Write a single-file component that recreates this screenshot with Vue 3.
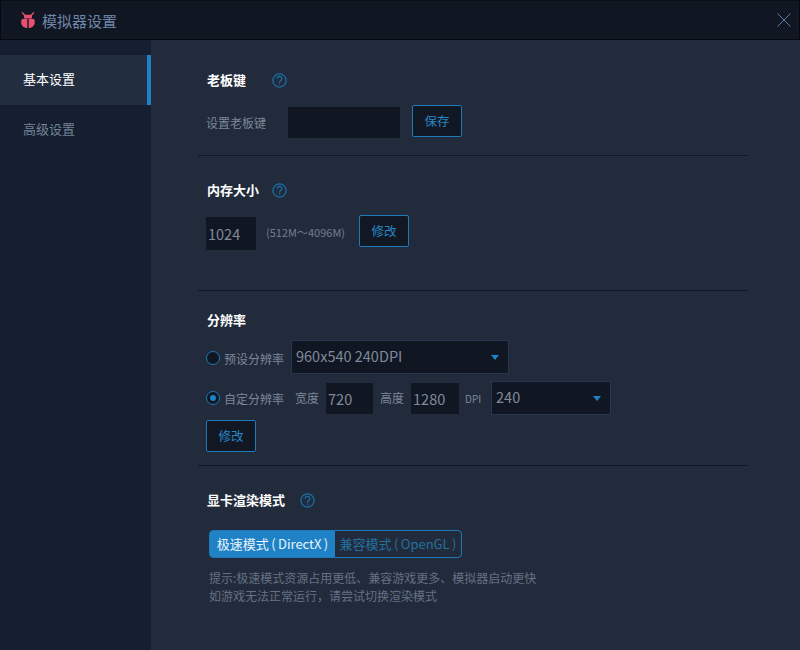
<script setup>
const Q = 'M7 7.500a3 3 0 1 1 4.600 2.500c-1.200.8-1.600 1.400-1.600 3'
</script>

<template>
  <div class="win">
    <header class="titlebar">
      <svg class="logo" width="14" height="16" viewBox="0 0 14 16">
        <path d="M1.600 0 4.200 2.800h5.600L12.400 0l1 .7-2.500 3L11 6.500H3L3.100 3.700.6.700z" fill="#e9506f" />
        <path d="M1 7H6.300v9C3 16 .2 13.500.2 10.500.2 9 .3 8 1 7zM7.700 7H13c.7 1 .8 2 .8 3.500 0 3-2.800 5.500-6.100 5.500z" fill="#e9506f" />
      </svg>
      <span class="title">模拟器设置</span>
      <svg class="close" width="14" height="14" viewBox="0 0 14 14">
        <path d="M.5.5l13 13M13.500.5l-13 13" stroke="#5d7ba6" fill="none" />
      </svg>
    </header>
    <div class="body">
      <nav class="side">
        <div class="nav active">基本设置</div>
        <div class="nav">高级设置</div>
      </nav>
      <main class="main">
        <section class="sec s1">
          <div class="head">
            <h3>老板键</h3>
            <svg class="help h1" width="15" height="15" viewBox="0 0 20 20"><circle cx="10" cy="10" r="8.800" /><path :d="Q" /><path d="M10 14.200v1.500" /></svg>
          </div>
          <div class="row r1">
            <span class="label kl">设置老板键</span>
            <div class="input key"></div>
            <button class="btn">保存</button>
          </div>
        </section>
        <section class="sec s2">
          <div class="head">
            <h3>内存大小</h3>
            <svg class="help h2" width="15" height="15" viewBox="0 0 20 20"><circle cx="10" cy="10" r="8.800" /><path :d="Q" /><path d="M10 14.200v1.500" /></svg>
          </div>
          <div class="row r2">
            <div class="input mem">1024</div>
            <span class="range">(512M～4096M)</span>
            <button class="btn">修改</button>
          </div>
        </section>
        <section class="sec s3">
          <div class="head"><h3>分辨率</h3></div>
          <div class="row r3">
            <span class="radio"></span>
            <span class="label rl">预设分辨率</span>
            <div class="select preset"><span>960x540 240DPI</span><i class="caret"></i></div>
          </div>
          <div class="row r4">
            <span class="radio on"></span>
            <span class="label rl">自定分辨率</span>
            <span class="label w">宽度</span>
            <div class="input small w720">720</div>
            <span class="label w">高度</span>
            <div class="input small w1280">1280</div>
            <span class="dpi">DPI</span>
            <div class="select dpis"><span>240</span><i class="caret"></i></div>
          </div>
          <button class="btn modify">修改</button>
        </section>
        <section class="sec s4">
          <div class="head">
            <h3>显卡渲染模式</h3>
            <svg class="help h3i" width="15" height="15" viewBox="0 0 20 20"><circle cx="10" cy="10" r="8.800" /><path :d="Q" /><path d="M10 14.200v1.500" /></svg>
          </div>
          <div class="toggle">
            <div class="opt sel">极速模式 ( DirectX )</div>
            <div class="opt">兼容模式 ( OpenGL )</div>
          </div>
          <p class="hint">提示:极速模式资源占用更低、兼容游戏更多、模拟器启动更快<br />如游戏无法正常运行，请尝试切换渲染模式</p>
        </section>
      </main>
    </div>
  </div>
</template>

<style>
html, body { margin: 0; background: #222b3c; }
</style>

<style scoped>
.win { width: 800px; height: 650px; display: flex; flex-direction: column; overflow: hidden; background: #222b3c; color: #8a94a6; font-family: "Noto Sans CJK SC", "Liberation Sans", sans-serif; font-size: 12px; }
.titlebar { height: 40px; flex: none; display: flex; align-items: center; padding: 0 8px 0 20px; background: #111722; border: 1px solid #05080d; border-top-color: #0a0e15; box-sizing: border-box; }
.logo { margin-right: 7px; }
.title { font-size: 15px; color: #6f86a8; flex: 1; }
.close { margin-bottom: 1px; }
.body { flex: 1; display: flex; min-height: 0; }
.side { width: 151px; flex: none; padding-top: 15px; background: #151f30; box-sizing: border-box; }
.nav { height: 50px; line-height: 48px; padding-left: 23px; font-size: 13px; color: #748397; box-sizing: border-box; }
.nav.active { background: #222e40; color: #fff; border-right: 4px solid #1f82c6; }
.main { flex: 1; padding-left: 47px; }
.sec { width: 550px; padding-left: 9px; box-sizing: border-box; border-bottom: 1px solid #111724; }
.s1 { height: 116px; padding-top: 30px; }
.s2 { height: 135px; padding-top: 24px; }
.s3 { height: 175px; padding-top: 19px; }
.s4 { border-bottom: 0; padding-top: 24px; }
.head { display: flex; align-items: center; height: 20px; }
h3 { margin: 0; font-size: 13px; font-weight: 700; color: #fff; line-height: 20px; }
.help { fill: none; stroke: #1b6fa8; stroke-width: 1.700; }
.h1 { margin-left: 26px; }
.h2 { margin-left: 13px; }
.h3i { margin-left: 15px; }
.row { display: flex; align-items: center; }
.r1 { margin-top: 15px; height: 32px; }
.label { font-size: 12px; color: #7c8799; white-space: nowrap; }
.kl { margin: 2px 0 0 -1px; }
.key { width: 112px; height: 31px; margin-left: 22px; margin-top: 2px; }
.input { background: #111722; color: #7f8b9d; font-size: 14.500px; box-sizing: border-box; display: flex; align-items: center; padding-left: 2px; }
.btn { box-sizing: border-box; width: 50px; height: 32px; padding: 0 0 2px; background: #111823; border: 1px solid #1f78b8; border-radius: 2px; color: #2786c6; font-family: inherit; font-size: 12.500px; display: block; }
.r1 .btn { margin-left: 12px; }
.r2 { margin-top: 15px; height: 35px; }
.mem { width: 50px; height: 33px; margin: 2px 0 0 -1px; }
.range { margin: 0 15px 2px 10px; color: #727e91; font-size: 11px; width: 78px; white-space: nowrap; }
.r2 .btn { align-self: flex-start; }
.r3 { margin-top: 10px; height: 34px; }
.r3 .radio { margin-top: 2px; }
.radio { width: 14px; height: 14px; margin-left: -1px; box-sizing: border-box; border: 1.500px solid #1f78b8; border-radius: 50%; background: #111722; flex: none; position: relative; }
.radio.on::after { content: ""; position: absolute; left: 2.500px; top: 2.500px; width: 6px; height: 6px; border-radius: 50%; background: #1f82c6; }
.rl { margin: 2px 0 0 4px; }
.r4 .rl { margin-top: 0; }
.select { box-sizing: border-box; background: #111722; border: 1px solid #2a3650; display: flex; align-items: center; justify-content: space-between; color: #7f8b9d; font-size: 14.500px; padding: 0 9px 3px 4px; }
.preset { width: 218px; height: 34px; margin-left: 7px; }
.dpis { width: 120px; height: 34px; margin-left: 9px; }
.caret { width: 0; height: 0; margin-top: 3px; border: 4px solid transparent; border-top: 5px solid #1f82c6; border-bottom: 0; }
.r4 { margin-top: 7px; height: 34px; }
.w { margin: 0 0 2px 11px; }
.small { height: 31px; margin: 1px 0 0 7px; }
.w720 { width: 47px; }
.r4 .w + .w1280 { margin-left: 7px; }
.r4 .w720 + .w { margin-left: 7px; }
.w1280 { width: 48px; }
.dpi { font-size: 10px; color: #7c8799; margin-left: 6px; width: 17px; }
.modify { margin: 5px 0 0 -1px; }
.toggle { display: flex; width: 253px; height: 28px; margin: 20px 0 0 2px; box-sizing: border-box; border: 1px solid #1f78b8; border-radius: 4px; overflow: hidden; }
.opt { flex: 1; display: flex; align-items: center; justify-content: center; color: #23709f; font-size: 13px; white-space: nowrap; word-spacing: -0.500px; padding-bottom: 1px; box-sizing: border-box; }
.opt.sel { flex: none; width: 125px; background: #1f82c6; color: #eaf4fb; }
.hint { margin: 11px 0 0 2px; font-size: 12px; line-height: 18px; color: #667184; }
</style>
